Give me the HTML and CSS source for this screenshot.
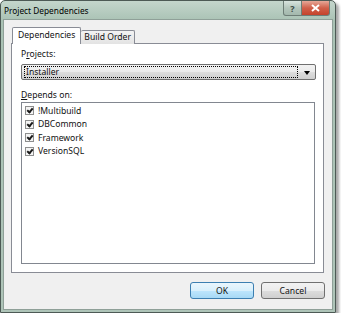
FILE: index.html
```html
<!DOCTYPE html>
<html lang="en">
<head>
    <meta charset="UTF-8">
    <title>Project Dependencies</title>
    <link rel="stylesheet" href="styles.css">
</head>
<body>
    <div class="window">
        <div class="titlebar">
            <span class="title">Project Dependencies</span>
            <div class="caption-buttons">
                <span class="cap-btn help">?</span>
                <span class="cap-btn close">
                    <svg width="9" height="8" viewBox="0 0 9 8"><path d="M1 1 L8 7 M8 1 L1 7" stroke="#fff" stroke-width="2"/></svg>
                </span>
            </div>
        </div>
        <div class="client">
            <div class="tabs">
                <div class="tab active">Dependencies</div>
                <div class="tab">Build Order</div>
            </div>
            <div class="panel">
                <div class="field-label">P<u>r</u>ojects:</div>
                <div class="combo">
                    <div class="combo-value">Installer</div>
                    <span class="combo-arrow"></span>
                </div>
                <div class="field-label deps-label"><u>D</u>epends on:</div>
                <div class="listbox">
                    <div class="item"><span class="check"></span>!Multibuild</div>
                    <div class="item"><span class="check"></span>DBCommon</div>
                    <div class="item"><span class="check"></span>Framework</div>
                    <div class="item"><span class="check"></span>VersionSQL</div>
                </div>
            </div>
            <div class="buttons">
                <button class="btn default">OK</button>
                <button class="btn">Cancel</button>
            </div>
        </div>
    </div>
</body>
</html>
```
FILE: styles.css
```css
body {
    margin: 0;
    background: #fff;
    font-family: "Noto Sans", Arial, sans-serif;
    font-size: 8.6px;
    color: #111;
}
.window {
    width: 330px;
    height: 309px;
    margin: 0;
    border: 1px solid #4d5a55;
    border-radius: 5px 5px 0 0;
    background: linear-gradient(#c4d6cc, #a9c2b4 20px, #aec4b8);
    padding: 0 2px 2px 2px;
    display: flex;
    flex-direction: column;
    box-shadow: 3px 3px 3px rgba(0, 0, 0, 0.35);
}
.titlebar {
    height: 18px;
    display: flex;
    justify-content: space-between;
    align-items: flex-start;
}
.title {
    margin: 4px 0 0 1px;
    font-size: 8.3px;
    color: #000;
}
.caption-buttons {
    display: flex;
    margin-right: 3px;
}
.cap-btn {
    height: 14px;
    display: flex;
    align-items: center;
    justify-content: center;
    border: 1px solid #6d7d76;
    border-top: none;
    font-weight: bold;
    font-size: 9px;
}
.help {
    width: 17px;
    border-radius: 0 0 0 3px;
    background: linear-gradient(#d8e4de, #b4c6bc 50%, #a3b8ad);
    color: #3c4a44;
}
.close {
    width: 27px;
    border-left: none;
    border-radius: 0 0 3px 0;
    background: linear-gradient(#e6a898, #d0604a 50%, #c4432b);
}
.client {
    flex: 1;
    background: #f0f0f0;
    border: 1px solid #8fa098;
    display: flex;
    flex-direction: column;
}
.tabs {
    display: flex;
    align-items: flex-end;
    height: 24px;
    padding-left: 8px;
    position: relative;
    z-index: 1;
    margin-bottom: -1px;
}
.tab {
    height: 13px;
    padding: 0 3px 0 3px;
    border: 1px solid #898c95;
    border-bottom: none;
    border-left: none;
    background: linear-gradient(#f3f3f3, #e3e3e3);
    line-height: 13px;
    border-radius: 2px 2px 0 0;
}
.tab.active {
    height: 16px;
    padding: 0 5px;
    background: #fff;
    border-left: 1px solid #898c95;
    line-height: 15px;
}
.panel {
    margin: 0 8px 0 7px;
    height: 216px;
    background: #fff;
    border: 1px solid #898c95;
    padding: 4px 7px 8px 9px;
    display: flex;
    flex-direction: column;
}
.field-label {
    height: 13px;
    line-height: 13px;
}
.combo {
    margin-top: 3px;
    height: 14px;
    border: 1px solid #707070;
    border-radius: 2px;
    background: linear-gradient(#f2f2f2, #ebebeb 50%, #dddddd 51%, #cfcfcf);
    display: flex;
    align-items: center;
    padding: 0 3px 0 2px;
}
.combo-value {
    flex: 1;
    height: 10px;
    line-height: 10px;
    border: 1px dotted #000;
    padding-left: 1px;
}
.combo-arrow {
    width: 0;
    height: 0;
    margin: 1px 2px 0 6px;
    border-left: 3px solid transparent;
    border-right: 3px solid transparent;
    border-top: 4px solid #000;
}
.deps-label {
    margin-top: 9px;
}
.listbox {
    margin-top: 0;
    margin-right: 1px;
    flex: 1;
    border: 1px solid #828790;
    padding: 1px 3px;
}
.item {
    height: 13.5px;
    display: flex;
    align-items: center;
}
.check {
    width: 7px;
    height: 7px;
    border: 1px solid #8e8f8f;
    background: #f4f4f4;
    margin-right: 4px;
    position: relative;
}
.check::after {
    content: "";
    position: absolute;
    left: 2px;
    top: 0px;
    width: 2px;
    height: 4px;
    border: solid #1a1a1a;
    border-width: 0 2px 2px 0;
    transform: rotate(40deg);
}
.buttons {
    display: flex;
    justify-content: flex-end;
    gap: 7px;
    padding: 9px 7px 0 0;
}
.btn {
    width: 64px;
    height: 17px;
    font-family: "Noto Sans", Arial, sans-serif;
    font-size: 8.6px;
    color: #111;
    border: 1px solid #707070;
    border-radius: 3px;
    background: linear-gradient(#f2f2f2, #ebebeb 50%, #dddddd 51%, #cfcfcf);
    padding: 0;
}
.btn.default {
    border-color: #3c7fb1;
    background: linear-gradient(#eaf6fd, #d9f0fc 50%, #bee6fd 51%, #a7d9f5);
}
```
